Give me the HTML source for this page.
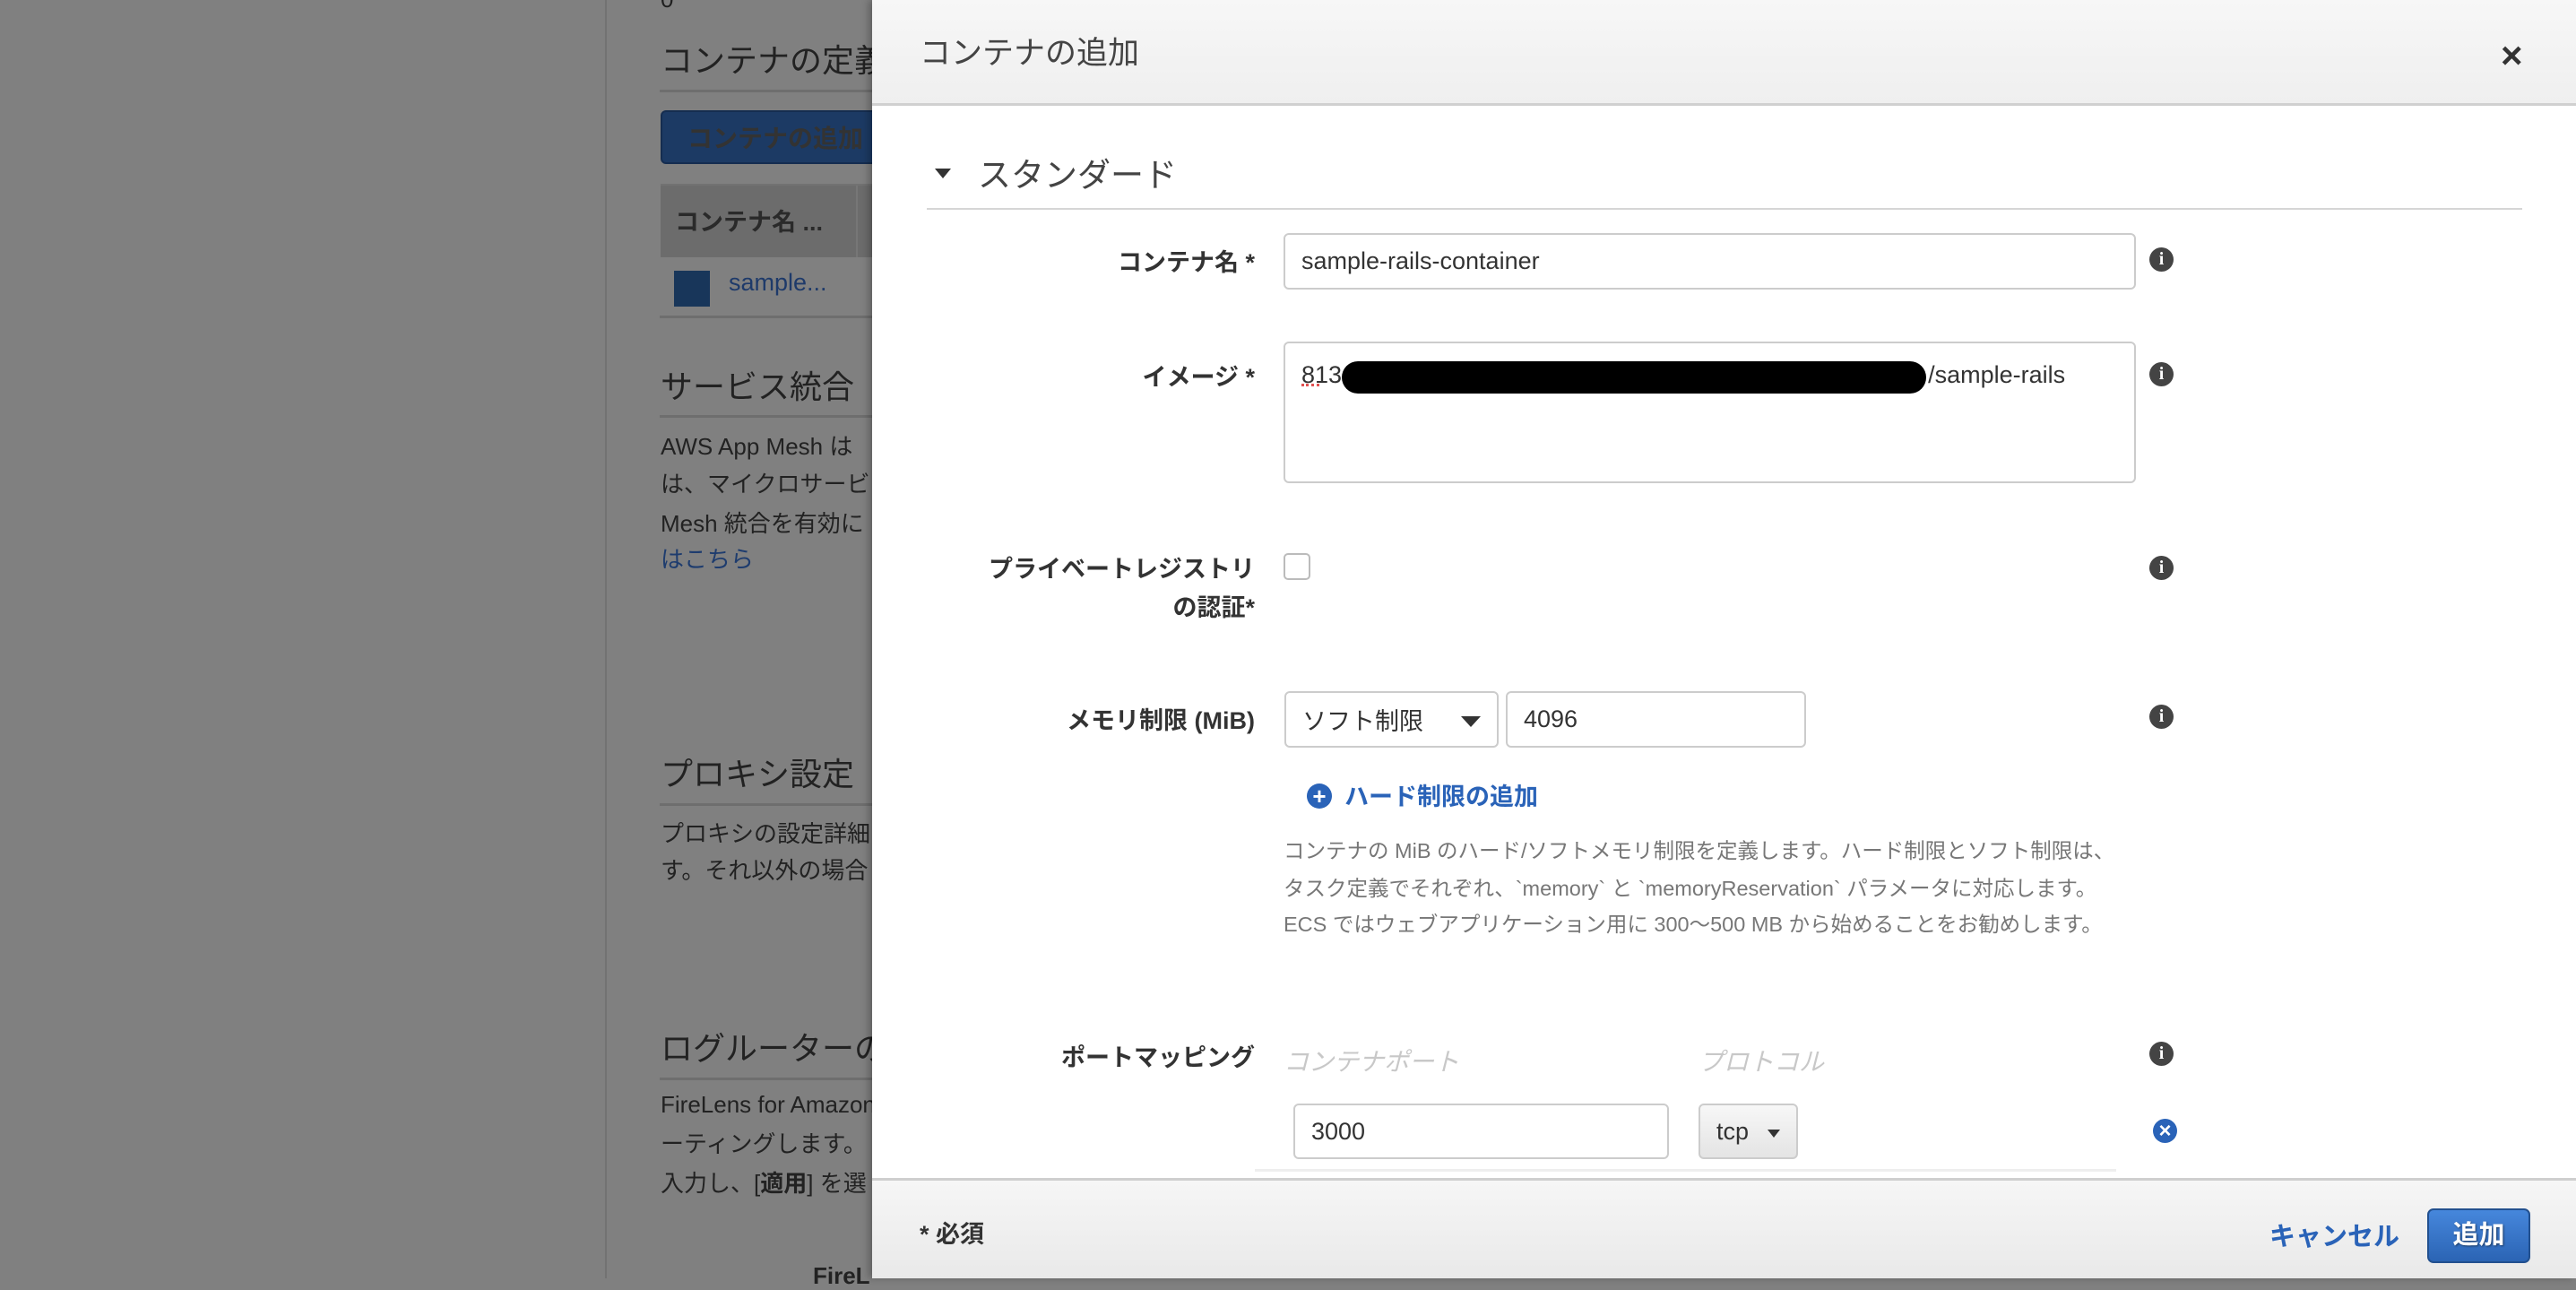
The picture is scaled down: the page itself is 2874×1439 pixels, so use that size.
<!DOCTYPE html>
<html><head><meta charset="utf-8">
<style>
*{box-sizing:border-box;margin:0;padding:0}
body{width:2874px;height:1426px;overflow:hidden;background:#808080;position:relative;font-family:"Liberation Sans","Noto Sans CJK JP",sans-serif;color:#222}
.a{position:absolute;white-space:nowrap}
.bgt{color:#1f1f1f}
.h{font-size:36px;color:#222}
.p{font-size:26px;color:#222}
.hl{position:absolute;height:3px;background:#6e6e6e;left:736px;width:240px}
.modal{position:absolute;left:973px;top:0;width:1901px;height:1426px;background:#fff;box-shadow:-4px 0 8px rgba(0,0,0,.25)}
.lbl{position:absolute;right:1474px;font-size:27px;font-weight:bold;color:#333;text-align:right;white-space:nowrap}
.inp{position:absolute;border:2px solid #ccc;border-radius:6px;background:#fff;font-size:27px;color:#333;padding-left:18px;display:flex;align-items:center}
.info{position:absolute;width:27px;height:27px;border-radius:50%;background:#444;color:#fff;font:bold 20px "Liberation Serif",serif;text-align:center;line-height:27px}
</style></head><body>
<!-- background page -->
<div class="a" style="left:675px;top:0;width:2px;height:1426px;background:#727272"></div>
<div class="a bgt" style="left:737px;top:-16px;font-size:26px">0</div>
<div class="a h" style="left:737px;top:39px">コンテナの定義</div>
<div class="hl" style="top:100px"></div>
<div class="a" style="left:737px;top:123px;width:260px;height:60px;background:#1c3a64;border:2px solid #152d50;border-radius:6px"></div>
<div class="a" style="left:767px;top:133px;font-size:28px;font-weight:bold;color:#333">コンテナの追加</div>
<div class="a" style="left:737px;top:205px;width:260px;height:82px;background:#6c6c6c;border-top:2px solid #727272"></div>
<div class="a" style="left:955px;top:207px;width:2px;height:80px;background:#777"></div>
<div class="a" style="left:753px;top:226px;font-size:27px;font-weight:bold;color:#2a2a2a">コンテナ名 ...</div>
<div class="a" style="left:752px;top:302px;width:40px;height:40px;background:#18365a"></div>
<div class="a" style="left:813px;top:300px;font-size:27px;color:#1e3a6a">sample...</div>
<div class="hl" style="top:352px"></div>
<div class="a h" style="left:737px;top:403px">サービス統合</div>
<div class="hl" style="top:463px"></div>
<div class="a p" style="left:737px;top:478px">AWS App Mesh は</div>
<div class="a p" style="left:737px;top:520px">は、マイクロサービ</div>
<div class="a p" style="left:737px;top:564px">Mesh 統合を有効に</div>
<div class="a p" style="left:737px;top:604px;color:#1e3c6e">はこちら</div>
<div class="a h" style="left:737px;top:835px">プロキシ設定</div>
<div class="hl" style="top:896px"></div>
<div class="a p" style="left:737px;top:910px">プロキシの設定詳細</div>
<div class="a p" style="left:737px;top:951px">す。それ以外の場合</div>
<div class="a h" style="left:737px;top:1141px">ログルーターの</div>
<div class="hl" style="top:1202px"></div>
<div class="a p" style="left:737px;top:1217px">FireLens for Amazon</div>
<div class="a p" style="left:737px;top:1256px">ーティングします。</div>
<div class="a p" style="left:737px;top:1300px">入力し、[<b>適用</b>] を選</div>
<div class="a p" style="left:907px;top:1408px;font-weight:bold">FireL</div>

<div class="modal">
 <div class="a" style="left:0;top:0;width:1901px;height:118px;background:linear-gradient(#f7f7f7,#efefef);border-bottom:3px solid #d0d0d0"></div>
 <div class="a" style="left:53px;top:31px;font-size:35px;color:#444">コンテナの追加</div>
 <div class="a" style="left:1817px;top:38px;font-size:42px;font-weight:bold;color:#333">×</div>

 <div class="a" style="left:70px;top:188px;width:0;height:0;border-left:9px solid transparent;border-right:9px solid transparent;border-top:11px solid #333"></div>
 <div class="a" style="left:118px;top:165px;font-size:37px;color:#444">スタンダード</div>
 <div class="a" style="left:61px;top:232px;width:1780px;height:2px;background:#d6d6d6"></div>
</div>

<div class="lbl" style="top:271px">コンテナ名 *</div>
<div class="inp" style="left:1432px;top:260px;width:951px;height:63px">sample-rails-container</div>
<div class="info" style="left:2398px;top:276px">i</div>

<div class="lbl" style="top:399px">イメージ *</div>
<div class="inp" style="left:1432px;top:381px;width:951px;height:158px;align-items:flex-start;padding-top:20px">813<span style="display:inline-block;width:652px;height:36px;background:#000;border-radius:18px;margin-right:2px"></span>/sample-rails</div>
<div class="a" style="left:1452px;top:428px;width:20px;border-top:3px dotted #e05050"></div>
<div class="info" style="left:2398px;top:404px">i</div>

<div class="lbl" style="top:613px">プライベートレジストリ</div>
<div class="lbl" style="top:656px">の認証*</div>
<div class="a" style="left:1432px;top:617px;width:30px;height:30px;border:2px solid #bbb;border-radius:5px"></div>
<div class="info" style="left:2398px;top:620px">i</div>

<div class="lbl" style="top:782px">メモリ制限 (MiB)</div>
<div class="inp" style="left:1433px;top:771px;width:239px;height:63px">ソフト制限<span style="position:absolute;right:18px;top:26px;border-left:11px solid transparent;border-right:11px solid transparent;border-top:12px solid #333"></span></div>
<div class="inp" style="left:1680px;top:771px;width:335px;height:63px">4096</div>
<div class="info" style="left:2398px;top:786px">i</div>

<div class="a" style="left:1458px;top:874px;width:28px;height:28px;border-radius:50%;background:#2a63b8;color:#fff;font:bold 26px/28px 'Liberation Sans',sans-serif;text-align:center">+</div>
<div class="a" style="left:1500px;top:867px;font-size:27px;font-weight:bold;color:#2a63b8">ハード制限の追加</div>

<div class="a" style="left:1432px;top:930px;font-size:23.5px;color:#777">コンテナの MiB のハード/ソフトメモリ制限を定義します。ハード制限とソフト制限は、</div>
<div class="a" style="left:1432px;top:972px;font-size:23.5px;color:#777">タスク定義でそれぞれ、`memory` と `memoryReservation` パラメータに対応します。</div>
<div class="a" style="left:1432px;top:1012px;font-size:23.5px;color:#777">ECS ではウェブアプリケーション用に 300〜500 MB から始めることをお勧めします。</div>

<div class="lbl" style="top:1158px">ポートマッピング</div>
<div class="a" style="left:1432px;top:1163px;font-size:28px;color:#c8c8c8;font-style:italic">コンテナポート</div>
<div class="a" style="left:1895px;top:1163px;font-size:28px;color:#c8c8c8;font-style:italic">プロトコル</div>
<div class="info" style="left:2398px;top:1162px">i</div>
<div class="inp" style="left:1443px;top:1231px;width:419px;height:62px">3000</div>
<div class="inp" style="left:1895px;top:1231px;width:111px;height:62px;background:linear-gradient(#f7f7f7,#e4e4e4);padding-left:18px">tcp<span style="position:absolute;right:18px;top:27px;border-left:7px solid transparent;border-right:7px solid transparent;border-top:9px solid #333"></span></div>
<div class="a" style="left:2402px;top:1248px;width:27px;height:27px;border-radius:50%;background:#2a63b8;color:#fff;font:bold 24px/27px 'Liberation Sans',sans-serif;text-align:center">×</div>
<div class="a" style="left:1400px;top:1304px;width:961px;height:3px;background:#eee"></div>

<div class="a" style="left:973px;top:1314px;width:1901px;height:112px;background:linear-gradient(#f6f6f6,#e9e9e9);border-top:3px solid #cfcfcf"></div>
<div class="a" style="left:1026px;top:1355px;font-size:27px;font-weight:bold;color:#333">* 必須</div>
<div class="a" style="left:2532px;top:1356px;font-size:29px;font-weight:bold;color:#2a63b8">キャンセル</div>
<div class="a" style="left:2708px;top:1348px;width:115px;height:61px;border-radius:7px;background:linear-gradient(#4687dc,#2b64b4);border:2px solid #22508f;color:#fff;font-size:29px;font-weight:bold;text-align:center;line-height:57px;text-shadow:1px 1px 2px rgba(0,0,0,.5)">追加</div>
</body></html>
